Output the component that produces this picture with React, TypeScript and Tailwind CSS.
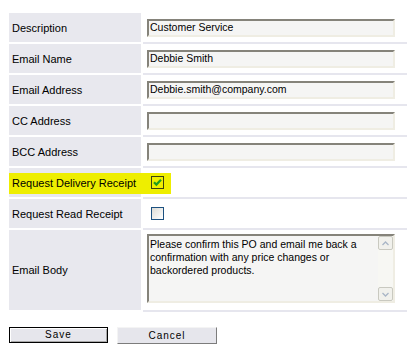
import React from 'react';

const font = "font-['Liberation_Sans',Arial,sans-serif]";

// inset XP-style field border
const fieldBorder =
  'border-2 border-t-[#85837a] border-l-[#85837a] border-b-[#efede3] border-r-[#efede3] bg-[#f5f5f4]';

function TextField({ value }: { value?: string }) {
  return (
    <div className={`ml-[4px] h-[18px] w-[248px] flex items-center pl-[1px] text-[10.5px] ${fieldBorder}`}>
      <span className="leading-none">{value}</span>
    </div>
  );
}

function CheckBox({ checked }: { checked?: boolean }) {
  if (checked) {
    return (
      <div className="relative z-[2] ml-[8px] w-[13px] h-[13px] border border-[#3c4210] flex items-center justify-center">
        <svg width="9" height="9" viewBox="0 0 9 9">
          <path d="M1 4.2 L3.4 6.6 L8 1.8" fill="none" stroke="#1f9e1f" strokeWidth="2.2" />
        </svg>
      </div>
    );
  }
  return (
    <div className="ml-[8px] w-[13px] h-[13px] border border-[#1c5180] bg-gradient-to-br from-[#dcdcd6] to-[#ffffff]" />
  );
}

function Row({
  label,
  children,
  tall,
  highlight,
}: {
  label: string;
  children?: React.ReactNode;
  tall?: boolean;
  highlight?: boolean;
}) {
  const h = tall ? 'h-[82px]' : 'h-[31px]';
  return (
    <div className={`relative flex gap-[2px] ${h}`}>
      {highlight && (
        <div className="absolute left-0 top-[5px] w-[162px] h-[21px] bg-[#eeee00] z-[1]" />
      )}
      <div className={`w-[132px] ${h} border-b-2 border-white bg-[#e8e8ee] flex items-center pl-[3px] pt-[1px]`}>
        <span className="relative z-[2]">{label}</span>
      </div>
      <div className={`flex-1 ${h} border-b-2 border-[#e6e6ee] ${tall ? 'pt-[4px]' : 'flex items-center'}`}>
        {children}
      </div>
    </div>
  );
}

function ScrollButton({ down }: { down?: boolean }) {
  return (
    <div className="w-[15px] h-[14px] border border-[#c9c9c0] bg-[#f1f1ec] rounded-[2px] flex items-center justify-center">
      <svg width="7" height="5" viewBox="0 0 7 5">
        <path
          d={down ? 'M0.5 1 L3.5 4 L6.5 1' : 'M0.5 4 L3.5 1 L6.5 4'}
          fill="none"
          stroke="#a9b6c6"
          strokeWidth="1.3"
        />
      </svg>
    </div>
  );
}

export default function App() {
  return (
    <div className={`w-[407px] h-[353px] bg-white pt-[13px] pl-[9px] text-[11px] text-black ${font}`}>
      <div className="flex flex-col">
        <Row label="Description">
          <TextField value="Customer Service" />
        </Row>
        <Row label="Email Name">
          <TextField value="Debbie Smith" />
        </Row>
        <Row label="Email Address">
          <TextField value="Debbie.smith@company.com" />
        </Row>
        <Row label="CC Address">
          <TextField />
        </Row>
        <Row label="BCC Address">
          <TextField />
        </Row>
        <Row label="Request Delivery Receipt" highlight>
          <CheckBox checked />
        </Row>
        <Row label="Request Read Receipt">
          <CheckBox />
        </Row>
        <Row label="Email Body" tall>
          <div className={`ml-[4px] w-[248px] h-[69px] flex ${fieldBorder}`}>
            <div className="flex-1 pl-[1px] pt-[2px] leading-[13px] text-[10.5px]">
              Please confirm this PO and email me back a
              <br />
              confirmation with any price changes or
              <br />
              backordered products.
            </div>
            <div className="w-[15px] flex flex-col justify-between bg-[#f7f7f3]">
              <ScrollButton />
              <ScrollButton down />
            </div>
          </div>
        </Row>
      </div>

      {/* Buttons */}
      <div className="flex items-start mt-[15px]">
        <button className="w-[99px] h-[16px] border border-black bg-[#e6e6ec] shadow-[inset_1px_1px_0_#ffffff,inset_-1px_-1px_0_#a8a8a8] text-[10px] tracking-[1px] leading-none flex items-center justify-center">
          Save
        </button>
        <button className="ml-[9px] w-[100px] h-[17px] border border-t-[#f4f4f4] border-l-[#f4f4f4] border-r-[#7c7c7c] border-b-[#7c7c7c] bg-[#e6e6ec] text-[10px] tracking-[1px] leading-none flex items-center justify-center">
          Cancel
        </button>
      </div>
    </div>
  );
}
